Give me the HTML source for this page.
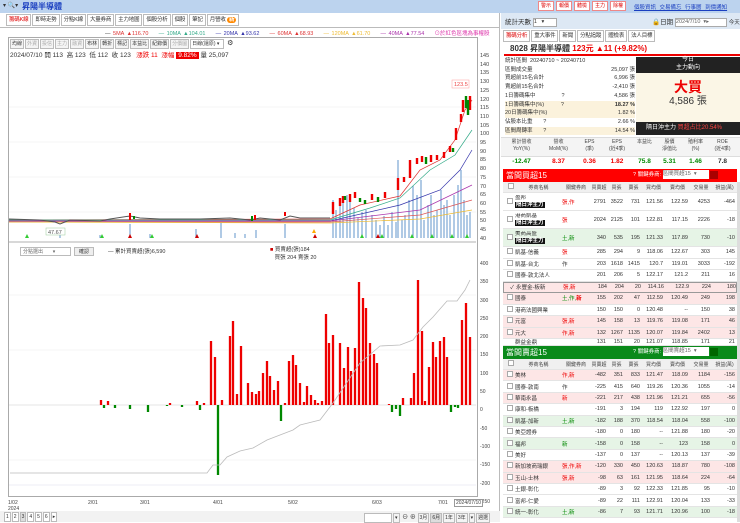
<!DOCTYPE html>
<html><head><meta charset="utf-8">
<style>
*{box-sizing:border-box;margin:0;padding:0}
body{width:740px;height:522px;overflow:hidden;background:#fff;font-family:"Liberation Sans","Noto Sans CJK TC",sans-serif;font-size:7px;color:#333;position:relative}
.a{position:absolute}
.tab{display:inline-block;border:1px solid #bbb;padding:0 2px;height:12px;line-height:11px;margin-right:1px;background:#fff;font-size:5.5px;letter-spacing:-0.2px}
.btn{display:inline-block;border:1px solid #bbb;padding:0 1px;height:10px;line-height:9px;margin-right:1px;background:#f4f4f4;font-size:5px}
.rb{display:inline-block;border:1px solid #e88;color:#d00;background:#fff;padding:0 2px;height:10px;line-height:9px;font-size:5px;margin-right:2px}
.row{position:absolute;left:503px;width:234px;display:flex;border-bottom:1px solid #e4e4e4;align-items:center;font-size:5.5px;white-space:nowrap;overflow:hidden}
.row span{display:block;text-align:right;padding-right:2px;overflow:hidden}
.c0{width:12px;flex:none}.c1{width:47px;flex:none;text-align:left!important}.c2{width:28px;flex:none;text-align:left!important}.c3{width:18px;flex:none}.c4{width:17px;flex:none}.c5{width:17px;flex:none}.c6{width:23px;flex:none}.c7{width:25px;flex:none}.c8{width:22px;flex:none}.c9{width:25px;flex:none}
.cb{display:inline-block;width:6px;height:6px;border:1px solid #aaa;background:#fff;margin-left:3px}
.pk{background:#fde6e6}.gn{background:#e6f4e6}
.hd{background:#f0f0f0;color:#444}
.hd span{text-align:center!important;padding:0!important;font-size:5px}
.bk{background:#111;color:#fff;padding:0 1px}
.r{color:#e00}.g{color:#080}
.st{position:absolute;left:505px;width:130px;display:flex;justify-content:space-between;font-size:5.5px;height:8.7px;line-height:8.7px;white-space:nowrap}
</style></head><body>
<div class="a" style="left:0;top:0;width:740px;height:13px;background:#bcd3ee"></div>
<div class="a" style="left:3px;top:2px;font-size:6px;color:#333">▾ 🔍▾</div>
<div class="a" style="left:22px;top:1px;font-size:8px;font-weight:bold;color:#1a3fc0">昇陽半導體</div>
<div class="a" style="left:538px;top:1px;white-space:nowrap"><span class="rb">警示</span><span class="rb">報價</span><span class="rb">體檢</span><span class="rb">主力</span><span class="rb">除權</span></div>
<div class="a" style="left:634px;top:3px;font-size:5.5px;color:#1a3fc0;text-decoration:underline;word-spacing:2px;white-space:nowrap">個股資訊 交易備忘 行事曆 到價通知</div>
<div class="a" style="left:0;top:13px;width:500px;height:509px;background:#fff;border-right:1px solid #bbb"></div>
<div class="a" style="left:6px;top:14px;white-space:nowrap"><span class="tab" style="color:#d00">籌碼K線</span><span class="tab">即時走勢</span><span class="tab">分點K線</span><span class="tab">大量券商</span><span class="tab">主力地圖</span><span class="tab">個股分析</span><span class="tab">個股</span><span class="tab">筆記</span><span class="tab">月營收 <b style="background:#f80;color:#fff;border-radius:4px;padding:0 2px">新</b></span></div>
<div class="a" style="left:0;top:27px;width:500px;height:1px;background:#bbb"></div>
<div class="a" style="left:105px;top:29px;font-size:5.5px;white-space:nowrap;word-spacing:1px"><span>— </span><span style="color:#d33">5MA ▲116.70</span> &nbsp;&nbsp; <span style="color:#3a8">— 10MA ▲104.01</span> &nbsp;&nbsp; <span style="color:#33a">— 20MA ▲93.62</span> &nbsp;&nbsp; <span style="color:#d33">— 60MA ▲68.93</span> &nbsp;&nbsp; <span style="color:#eb3">— 120MA ▲61.70</span> &nbsp;&nbsp; <span style="color:#a3a">— 40MA ▲77.54</span> &nbsp;&nbsp; <span style="color:#d3a">⊙於紅色區塊為事權股</span></div>
<div class="a" style="left:8px;top:37px;width:470px;height:460px;border:1px solid #aaa"></div>
<div class="a" style="left:10px;top:39px;white-space:nowrap"><span class="btn">均線</span><span class="btn" style="color:#aaa">外資</span><span class="btn" style="color:#aaa">投信</span><span class="btn" style="color:#aaa">主力</span><span class="btn" style="color:#aaa">融資</span><span class="btn">布林</span><span class="btn">轉折</span><span class="btn">標記</span><span class="btn">本益比</span><span class="btn">紀錄價</span><span class="btn" style="color:#aaa">分價圖</span><span class="btn" style="width:34px;background:#fff">日線(還原) ▾</span> ⚙</div>
<div class="a" style="left:10px;top:49px;font-size:6.5px;white-space:nowrap">2024/07/10 開 113 &nbsp;高 123 &nbsp;低 112 &nbsp;收 123 &nbsp;&nbsp;<span class="r">漲跌 11 &nbsp;漲幅</span> <span style="background:#e00;color:#fff;padding:0 2px">9.82%</span> 量 25,097</div>
<div class="a" style="left:480px;top:52px;font-size:5.5px;line-height:8.7px;color:#444">145<br>140<br>135<br>130<br>125<br>120<br>115<br>110<br>105<br>100<br>95<br>90<br>85<br>80<br>75<br>70<br>65<br>60<br>55<br>50<br>45<br>40</div>
<svg class="a" style="left:0;top:0" width="500" height="522">
<g stroke="#eee" stroke-width="0.6"><line x1="9" y1="107" x2="476" y2="107"/><line x1="9" y1="142" x2="476" y2="142"/><line x1="9" y1="177" x2="476" y2="177"/><line x1="9" y1="212" x2="476" y2="212"/><line x1="9" y1="295" x2="476" y2="295"/><line x1="9" y1="350" x2="476" y2="350"/><line x1="9" y1="460" x2="476" y2="460"/></g>
<path stroke="#8fb3da" stroke-width="1.4" fill="none" d="M60 238V234M100 238V235M130 238V224M150 238V234M196 238V229M221 238V223M235 238V233M245 238V234M256 238V230M285 238V224M333 238V200M336 238V210M340 238V205M343 238V203M347 238V195M350 238V200M354 238V208M358 238V218M362 238V212M366 238V210M372 238V215M376 238V220M380 238V225M384 238V216M388 238V225M392 238V212M396 238V222M398 238V160M402 238V220M405 238V215M409 238V200M413 238V186M417 238V195M421 238V180M424 238V220M428 238V205M431 238V195M434 238V215M437 238V210M441 238V190M444 238V205M447 238V200M450 238V215M454 238V195M458 238V185M461 238V170M464 238V200M467 238V215M470 238V212"/>
<g fill="none" stroke-width="0.7"><path stroke="#d33" d="M9 220L330 219L360 205L400 196L420 170L440 160L455 140L465 110L472 100"/><path stroke="#3a8" d="M9 220L330 220L370 208L400 198L430 170L455 155L472 130"/><path stroke="#33a" d="M9 221L330 221L400 205L440 190L460 170L472 150"/><path stroke="#a3a" d="M9 221L330 221L420 210L472 185"/><path stroke="#d55" d="M9 222L330 222L420 215L472 200"/><path stroke="#eb3" d="M9 222L330 223L420 219L472 210"/></g>
<path stroke="#555" stroke-width="1" fill="none" d="M9 219L40 220L55 222L60 224L70 220L100 221L110 219L130 216L140 218L160 219L200 219L230 218L250 220L260 218L280 220L290 216L300 218L320 218L330 218"/>
<path stroke="#e00" stroke-width="2" d="M130 213V220M255 215V220M285 212V216"/>
<path stroke="#080" stroke-width="2" d="M134 216V219M252 216V221"/>
<g stroke-width="2.4"><path stroke="#e00" d="M333 202V214M340 198V206M343 196V203M350 194V202M355 192V198M372 194V200M385 192V198M398 178V190M404 177V182M410 160V178M417 158V164M422 156V162M431 155V162M437 155V160M444 152V158M450 146V152M456 128V140M461 114V122M463 100V112M470 96V110"/><path stroke="#080" d="M345 196V200M360 198V202M365 200V204M378 197V202M426 157V164M453 148V152M466 96V108M468 100V115"/></g>
<rect x="452" y="80" width="17" height="8" fill="#fff" stroke="#f99" stroke-width="0.5"/><text x="454" y="86" font-size="5.5" fill="#e44">123.5</text>
<rect x="46" y="228" width="19" height="7" fill="#fff" stroke="#9c9" stroke-width="0.5"/><text x="48" y="234" font-size="5.5" fill="#555">47.67</text>
<path d="M25 238l2-4 2 4zM100 238l2-4 2 4zM150 238l2-4 2 4zM360 238l2-4 2 4zM380 238l2-4 2 4zM410 238l2-4 2 4zM430 238l2-4 2 4zM450 238l2-4 2 4zM465 238l2-4 2 4z" fill="#3c3"/><path d="M128 238l2-4 2 4zM195 238l2-4 2 4zM313 238l2-4 2 4zM376 238l2-4 2 4z" fill="#c00"/><path d="M312 233l2-4 2 4z" fill="#fa0"/>
<line x1="9" y1="242" x2="476" y2="242" stroke="#999" stroke-width="0.8"/>
<line x1="9" y1="405" x2="476" y2="405" stroke="#ccc" stroke-width="0.6"/>
<path stroke="#e00" stroke-width="2.3" fill="none" d="M101 405V400M108 405V401M170 405V403M197 405V401M204 405V403M211 405V341M215 405V357M222 405V400M230 405V336M233 405V321M237 405V394M241 405V346M248 405V383M252 405V392M256 405V394M259 405V391M263 405V373M267 405V361M270 405V376M274 405V390M278 405V381M285 405V403M289 405V361M293 405V355M296 405V365M300 405V383M304 405V402M307 405V386M311 405V395M315 405V400M318 405V403M322 405V401M326 405V314M329 405V343M333 405V335M340 405V343M344 405V368M348 405V347M351 405V371M355 405V348M359 405V282M363 405V298M366 405V308M370 405V343M374 405V354M377 405V363M389 405V404M403 405V398M411 405V398M414 405V373M418 405V280M422 405V331M425 405V401M429 405V367M433 405V342M436 405V357M440 405V341M444 405V337M447 405V357M462 405V320M466 405V303M470 405V337"/>
<path stroke="#080" stroke-width="2.3" fill="none" d="M104 405V408M115 405V408M130 405V409M148 405V412M167 405V406M182 405V407M200 405V410M218 405V475M281 405V421M392 405V412M396 405V409M400 405V416M451 405V412M455 405V407M458 405V408"/>
<polyline fill="none" stroke="#bbb" stroke-width="0.8" points="10,473 207,473 213,465 220,465 227,457 240,451 253,448 267,440 280,435 293,430 300,425 320,420 333,403 360,363 373,352 380,346 400,345 413,340 423,327 433,317 447,301 457,301 465,290 470,280"/>
<line x1="9" y1="485" x2="476" y2="485" stroke="#dde" stroke-width="0.6"/>
</svg>
<div class="a" style="left:20px;top:247px;width:51px;height:9px;border:1px solid #bbb;font-size:5px;line-height:8px;padding-left:2px;color:#666;white-space:nowrap">分點選出 &nbsp; &nbsp; &nbsp; ▾</div>
<div class="a" style="left:74px;top:247px;width:20px;height:9px;border:1px solid #bbb;background:#eee;font-size:5px;line-height:8px;text-align:center">確認</div>
<div class="a" style="left:108px;top:247px;font-size:5.5px;white-space:nowrap">— 累計買賣超(張)6,590</div>
<div class="a" style="left:270px;top:246px;font-size:5.5px;line-height:8px;white-space:nowrap"><span style="color:#c00">■</span> 買賣超(張)184<br>&nbsp;&nbsp; 買張 204 賣張 20</div>
<div class="a" style="left:480px;top:255px;font-size:5px;line-height:18.3px;color:#444">400<br>350<br>300<br>250<br>200<br>150<br>100<br>50<br>0<br>-50<br>-100<br>-150<br>-200<br>-250</div>
<div class="a" style="left:8px;top:500px;width:480px;font-size:5px;color:#444"><span class="a" style="left:0">1/02<br>2024</span><span class="a" style="left:80px">2/01</span><span class="a" style="left:132px">3/01</span><span class="a" style="left:205px">4/01</span><span class="a" style="left:280px">5/02</span><span class="a" style="left:364px">6/03</span><span class="a" style="left:430px">7/01</span><span class="a" style="left:446px;top:-1px;border:1px solid #999;background:#fff;padding:0 1px;white-space:nowrap">2024/07/10</span></div>
<div class="a" style="left:0;top:511px;width:500px;height:11px;background:#f2f2f2"></div>
<div class="a" style="left:4px;top:512px;white-space:nowrap"><span class="btn" style="background:#fff">1</span><span class="btn" style="background:#fff">2</span><span class="btn" style="background:#ddd">3</span><span class="btn" style="background:#fff">4</span><span class="btn" style="background:#fff">5</span><span class="btn" style="background:#fff">6</span><span class="btn" style="background:#fff">▸</span></div>
<div class="a" style="left:364px;top:512px;font-size:6px;white-space:nowrap"><span class="btn" style="width:28px;background:#fff">&nbsp;</span><span class="btn">▾</span> ⊖ ⊕ <span class="btn">3月</span><span class="btn" style="background:#ddd">6月</span><span class="btn">1年</span><span class="btn">3年</span><span class="btn">▾</span><span class="btn">週選</span></div>
<div class="a" style="left:501px;top:13px;width:239px;height:509px;background:#fff"></div>
<div class="a" style="left:501px;top:13px;width:239px;height:16px;background:#dde8f4"></div>
<div class="a" style="left:505px;top:16px;font-size:6.5px;white-space:nowrap">統計天數 <span style="display:inline-block;width:24px;height:9px;border:1px solid #aaa;background:#fff;font-size:5.5px;vertical-align:middle">1 &nbsp;&nbsp;▾</span></div>
<div class="a" style="left:652px;top:16px;font-size:6.5px;white-space:nowrap">🔒日期 <span style="display:inline-block;width:52px;height:9px;border:1px solid #aaa;background:#fff;font-size:5.5px;vertical-align:middle;color:#666">2024/7/10 &nbsp;▾▸</span> <span style="font-size:5.5px">今天</span></div>
<div class="a" style="left:503px;top:30px;white-space:nowrap"><span class="tab" style="color:#d00">籌碼分析</span><span class="tab">重大事件</span><span class="tab">新聞</span><span class="tab">分點追蹤</span><span class="tab">體檢表</span><span class="tab">法人目標</span></div>
<div class="a" style="left:510px;top:43px;font-size:8px;font-weight:bold;white-space:nowrap">8028 昇陽半導體 <span class="r">123元 ▲11 (+9.82%)</span></div>
<div class="a" style="left:504px;top:54px;width:236px;height:1.5px;background:#e00"></div>
<div class="st" style="top:57px"><span>統計區間 &nbsp;20240710 ~ 20240710</span></div>
<div class="st" style="top:65.7px"><span>區間成交量</span><span>25,097 張</span></div>
<div class="st" style="top:74.4px"><span>買超前15名合計</span><span>6,996 張</span></div>
<div class="st" style="top:83.1px"><span>賣超前15名合計</span><span>-2,410 張</span></div>
<div class="st" style="top:91.8px"><span>1日籌碼集中 &nbsp; &nbsp; &nbsp; &nbsp; &nbsp; &nbsp; &nbsp; &nbsp; ?</span><span>4,586 張</span></div>
<div class="st" style="top:100.5px;background:#fbf2dc"><span>1日籌碼集中(%) &nbsp; &nbsp; &nbsp; &nbsp; &nbsp; ?</span><span><b>18.27 %</b></span></div>
<div class="st" style="top:109.2px;background:#fbf2dc"><span>20日籌碼集中(%)</span><span>1.82 %</span></div>
<div class="st" style="top:117.9px"><span>佔股本比重 &nbsp; &nbsp; &nbsp; ?</span><span>2.66 %</span></div>
<div class="st" style="top:126.6px;background:#fbf2dc"><span>區間周轉率 &nbsp; &nbsp; &nbsp; ?</span><span>14.54 %</span></div>
<div class="a" style="left:636px;top:57px;width:104px;height:16px;background:#222;color:#fff;font-size:6px;text-align:center;line-height:7.5px">今日<br>主力動向</div>
<div class="a" style="left:636px;top:73px;width:104px;height:49px;background:#fbf6e6;text-align:center"><div style="color:#e00;font-size:14px;font-weight:bold;margin-top:6px;line-height:16px">大買</div><div style="font-size:10px;line-height:13px">4,586 張</div></div>
<div class="a" style="left:636px;top:122px;width:104px;height:13px;background:#222;color:#fff;font-size:6px;line-height:13px;padding-left:10px;white-space:nowrap">隔日沖主力 <span style="color:#f44">買超占比20.54%</span></div>
<div class="a" style="left:501px;top:137px;width:239px;height:20px;background:#f4f4f4;border-top:1px solid #ddd;border-bottom:1px solid #ddd"></div>
<div class="a" style="left:503px;top:139px;width:236px;display:flex;font-size:5px;text-align:center;line-height:7px;color:#444;white-space:nowrap"><span style="width:37px">累計營收<br>YoY(%)</span><span style="width:37px">營收<br>MoM(%)</span><span style="width:25px">EPS<br>(季)</span><span style="width:30px">EPS<br>(近4季)</span><span style="width:25px">本益比</span><span style="width:25px">股價<br>淨值比</span><span style="width:27px">殖利率<br>(%)</span><span style="width:27px">ROE<br>(近4季)</span></div>
<div class="a" style="left:503px;top:157px;width:236px;display:flex;font-size:6.5px;text-align:center;font-weight:bold;line-height:10px"><span style="width:37px" class="g">-12.47</span><span style="width:37px" class="r">8.37</span><span style="width:25px" class="r">0.36</span><span style="width:30px" class="r">1.82</span><span style="width:25px" class="g">75.8</span><span style="width:25px" class="g">5.31</span><span style="width:27px" class="g">1.46</span><span style="width:27px">7.8</span></div>
<div class="a" style="left:503px;top:169px;width:234px;height:13px;background:#f00;color:#fff;font-size:8px;line-height:13px;padding-left:3px;white-space:nowrap">當間買超15<span style="position:absolute;left:130px;font-size:5.5px">? 關鍵券商: <span style="display:inline-block;width:46px;height:9px;background:#fff;color:#666;vertical-align:middle;line-height:9px">區間買超15 &nbsp;▾</span> <span style="display:inline-block;width:8px;height:8px;background:#a00;vertical-align:middle"></span></span></div>
<div class="row hd" style="top:182px;height:11px"><span class="c0"><i class="cb"></i></span><span class="c1">券商名稱</span><span class="c2">關鍵券商</span><span class="c3">買賣超</span><span class="c4">買張</span><span class="c5">賣張</span><span class="c6">買均價</span><span class="c7">賣均價</span><span class="c8">交易量</span><span class="c9">損益(萬)</span></div>
<div class="row" style="top:193px;height:18px"><span class="c0"><i class="cb"></i></span><span class="c1" style="line-height:7px">盈邦<br><b class="bk">隔日沖主力</b></span><span class="c2 r">張,作</span><span class="c3">2791</span><span class="c4">3522</span><span class="c5">731</span><span class="c6">121.56</span><span class="c7">122.59</span><span class="c8">4253</span><span class="c9">-464</span></div>
<div class="row" style="top:211px;height:18px"><span class="c0"><i class="cb"></i></span><span class="c1" style="line-height:7px">港商凱基<br><b class="bk">隔日沖主力</b></span><span class="c2 r">張</span><span class="c3">2024</span><span class="c4">2125</span><span class="c5">101</span><span class="c6">122.81</span><span class="c7">117.15</span><span class="c8">2226</span><span class="c9">-18</span></div>
<div class="row gn" style="top:229px;height:18px"><span class="c0"><i class="cb"></i></span><span class="c1" style="line-height:7px">美商高盛<br><b class="bk">隔日沖主力</b></span><span class="c2 g">土,新</span><span class="c3">340</span><span class="c4">535</span><span class="c5">195</span><span class="c6">121.33</span><span class="c7">117.89</span><span class="c8">730</span><span class="c9">-10</span></div>
<div class="row" style="top:247px;height:11.5px"><span class="c0"><i class="cb"></i></span><span class="c1">凱基-信義</span><span class="c2 r">張</span><span class="c3">285</span><span class="c4">294</span><span class="c5">9</span><span class="c6">118.06</span><span class="c7">122.67</span><span class="c8">303</span><span class="c9">145</span></div>
<div class="row" style="top:258.5px;height:11.5px"><span class="c0"><i class="cb"></i></span><span class="c1">凱基-台北</span><span class="c2">作</span><span class="c3">203</span><span class="c4">1618</span><span class="c5">1415</span><span class="c6">120.7</span><span class="c7">119.01</span><span class="c8">3033</span><span class="c9">-192</span></div>
<div class="row" style="top:270px;height:11.5px"><span class="c0"><i class="cb"></i></span><span class="c1">國泰-敦北法人</span><span class="c2"></span><span class="c3">201</span><span class="c4">206</span><span class="c5">5</span><span class="c6">122.17</span><span class="c7">121.2</span><span class="c8">211</span><span class="c9">16</span></div>
<div class="row pk" style="top:281.5px;height:11.5px;border:1px solid #999"><span class="c0">✓</span><span class="c1">永豐金-板新</span><span class="c2 r">張,新</span><span class="c3">184</span><span class="c4">204</span><span class="c5">20</span><span class="c6">114.16</span><span class="c7">122.9</span><span class="c8">224</span><span class="c9">180</span></div>
<div class="row pk" style="top:293px;height:11.5px"><span class="c0"><i class="cb"></i></span><span class="c1">國泰</span><span class="c2 g">土,作,<b class="r">新</b></span><span class="c3">155</span><span class="c4">202</span><span class="c5">47</span><span class="c6">112.59</span><span class="c7">120.49</span><span class="c8">249</span><span class="c9">198</span></div>
<div class="row" style="top:304.5px;height:11.5px"><span class="c0"><i class="cb"></i></span><span class="c1">港商法國興業</span><span class="c2"></span><span class="c3">150</span><span class="c4">150</span><span class="c5">0</span><span class="c6">120.48</span><span class="c7">--</span><span class="c8">150</span><span class="c9">38</span></div>
<div class="row pk" style="top:316px;height:11.5px"><span class="c0"><i class="cb"></i></span><span class="c1">元富</span><span class="c2 r">張,新</span><span class="c3">145</span><span class="c4">158</span><span class="c5">13</span><span class="c6">119.76</span><span class="c7">119.08</span><span class="c8">171</span><span class="c9">46</span></div>
<div class="row pk" style="top:327.5px;height:11.5px"><span class="c0"><i class="cb"></i></span><span class="c1">元大</span><span class="c2 r">作,新</span><span class="c3">132</span><span class="c4">1267</span><span class="c5">1135</span><span class="c6">120.07</span><span class="c7">119.84</span><span class="c8">2402</span><span class="c9">13</span></div>
<div class="row" style="top:339px;height:7px"><span class="c0"></span><span class="c1">群益金鼎</span><span class="c2"></span><span class="c3">131</span><span class="c4">151</span><span class="c5">20</span><span class="c6">121.07</span><span class="c7">118.85</span><span class="c8">171</span><span class="c9">21</span></div>
<div class="a" style="left:503px;top:346px;width:234px;height:13px;background:#0a8a1a;color:#fff;font-size:8px;line-height:13px;padding-left:3px;white-space:nowrap">當間賣超15<span style="position:absolute;left:130px;font-size:5.5px">? 關鍵券商: <span style="display:inline-block;width:46px;height:9px;background:#fff;color:#666;vertical-align:middle;line-height:9px">區間賣超15 &nbsp;▾</span> <span style="display:inline-block;width:8px;height:8px;background:#060;vertical-align:middle"></span></span></div>
<div class="row hd" style="top:359px;height:11px"><span class="c0"><i class="cb"></i></span><span class="c1">券商名稱</span><span class="c2">關鍵券商</span><span class="c3">買賣超</span><span class="c4">買張</span><span class="c5">賣張</span><span class="c6">買均價</span><span class="c7">賣均價</span><span class="c8">交易量</span><span class="c9">損益(萬)</span></div>
<div class="row pk" style="top:370px;height:11.4px"><span class="c0"><i class="cb"></i></span><span class="c1">美林</span><span class="c2 r">作,新</span><span class="c3">-482</span><span class="c4">351</span><span class="c5">833</span><span class="c6">121.47</span><span class="c7">118.09</span><span class="c8">1184</span><span class="c9">-156</span></div>
<div class="row" style="top:381.4px;height:11.4px"><span class="c0"><i class="cb"></i></span><span class="c1">國泰-敦南</span><span class="c2">作</span><span class="c3">-225</span><span class="c4">415</span><span class="c5">640</span><span class="c6">119.26</span><span class="c7">120.36</span><span class="c8">1055</span><span class="c9">-14</span></div>
<div class="row pk" style="top:392.8px;height:11.4px"><span class="c0"><i class="cb"></i></span><span class="c1">華南永昌</span><span class="c2 r">新</span><span class="c3">-221</span><span class="c4">217</span><span class="c5">438</span><span class="c6">121.96</span><span class="c7">121.21</span><span class="c8">655</span><span class="c9">-56</span></div>
<div class="row" style="top:404.2px;height:11.4px"><span class="c0"><i class="cb"></i></span><span class="c1">康和-板橋</span><span class="c2"></span><span class="c3">-191</span><span class="c4">3</span><span class="c5">194</span><span class="c6">119</span><span class="c7">122.92</span><span class="c8">197</span><span class="c9">0</span></div>
<div class="row gn" style="top:415.6px;height:11.4px"><span class="c0"><i class="cb"></i></span><span class="c1">凱基-加新</span><span class="c2 g">土,新</span><span class="c3">-182</span><span class="c4">188</span><span class="c5">370</span><span class="c6">118.54</span><span class="c7">118.04</span><span class="c8">558</span><span class="c9">-100</span></div>
<div class="row" style="top:427px;height:11.4px"><span class="c0"><i class="cb"></i></span><span class="c1">美亞證券</span><span class="c2"></span><span class="c3">-180</span><span class="c4">0</span><span class="c5">180</span><span class="c6">--</span><span class="c7">121.88</span><span class="c8">180</span><span class="c9">-20</span></div>
<div class="row gn" style="top:438.4px;height:11.4px"><span class="c0"><i class="cb"></i></span><span class="c1">福邦</span><span class="c2 g">新</span><span class="c3">-158</span><span class="c4">0</span><span class="c5">158</span><span class="c6">--</span><span class="c7">123</span><span class="c8">158</span><span class="c9">0</span></div>
<div class="row" style="top:449.8px;height:11.4px"><span class="c0"><i class="cb"></i></span><span class="c1">美好</span><span class="c2"></span><span class="c3">-137</span><span class="c4">0</span><span class="c5">137</span><span class="c6">--</span><span class="c7">120.13</span><span class="c8">137</span><span class="c9">-39</span></div>
<div class="row pk" style="top:461.2px;height:11.4px"><span class="c0"><i class="cb"></i></span><span class="c1">新加坡商瑞銀</span><span class="c2 r">張,作,新</span><span class="c3">-120</span><span class="c4">330</span><span class="c5">450</span><span class="c6">120.63</span><span class="c7">118.87</span><span class="c8">780</span><span class="c9">-108</span></div>
<div class="row pk" style="top:472.6px;height:11.4px"><span class="c0"><i class="cb"></i></span><span class="c1">玉山-士林</span><span class="c2 r">張,新</span><span class="c3">-98</span><span class="c4">63</span><span class="c5">161</span><span class="c6">121.95</span><span class="c7">118.64</span><span class="c8">224</span><span class="c9">-64</span></div>
<div class="row" style="top:484px;height:11.4px"><span class="c0"><i class="cb"></i></span><span class="c1">土銀-彰化</span><span class="c2"></span><span class="c3">-89</span><span class="c4">3</span><span class="c5">92</span><span class="c6">122.33</span><span class="c7">121.85</span><span class="c8">95</span><span class="c9">-10</span></div>
<div class="row" style="top:495.4px;height:11.4px"><span class="c0"><i class="cb"></i></span><span class="c1">富邦-仁愛</span><span class="c2"></span><span class="c3">-89</span><span class="c4">22</span><span class="c5">111</span><span class="c6">122.91</span><span class="c7">120.04</span><span class="c8">133</span><span class="c9">-33</span></div>
<div class="row gn" style="top:506.8px;height:11.4px"><span class="c0"><i class="cb"></i></span><span class="c1">統一-彰化</span><span class="c2 g">土,新</span><span class="c3">-86</span><span class="c4">7</span><span class="c5">93</span><span class="c6">121.71</span><span class="c7">120.96</span><span class="c8">100</span><span class="c9">-18</span></div>
<div class="a" style="left:737px;top:182px;width:3px;height:340px;background:#ddd"></div>
</body></html>
